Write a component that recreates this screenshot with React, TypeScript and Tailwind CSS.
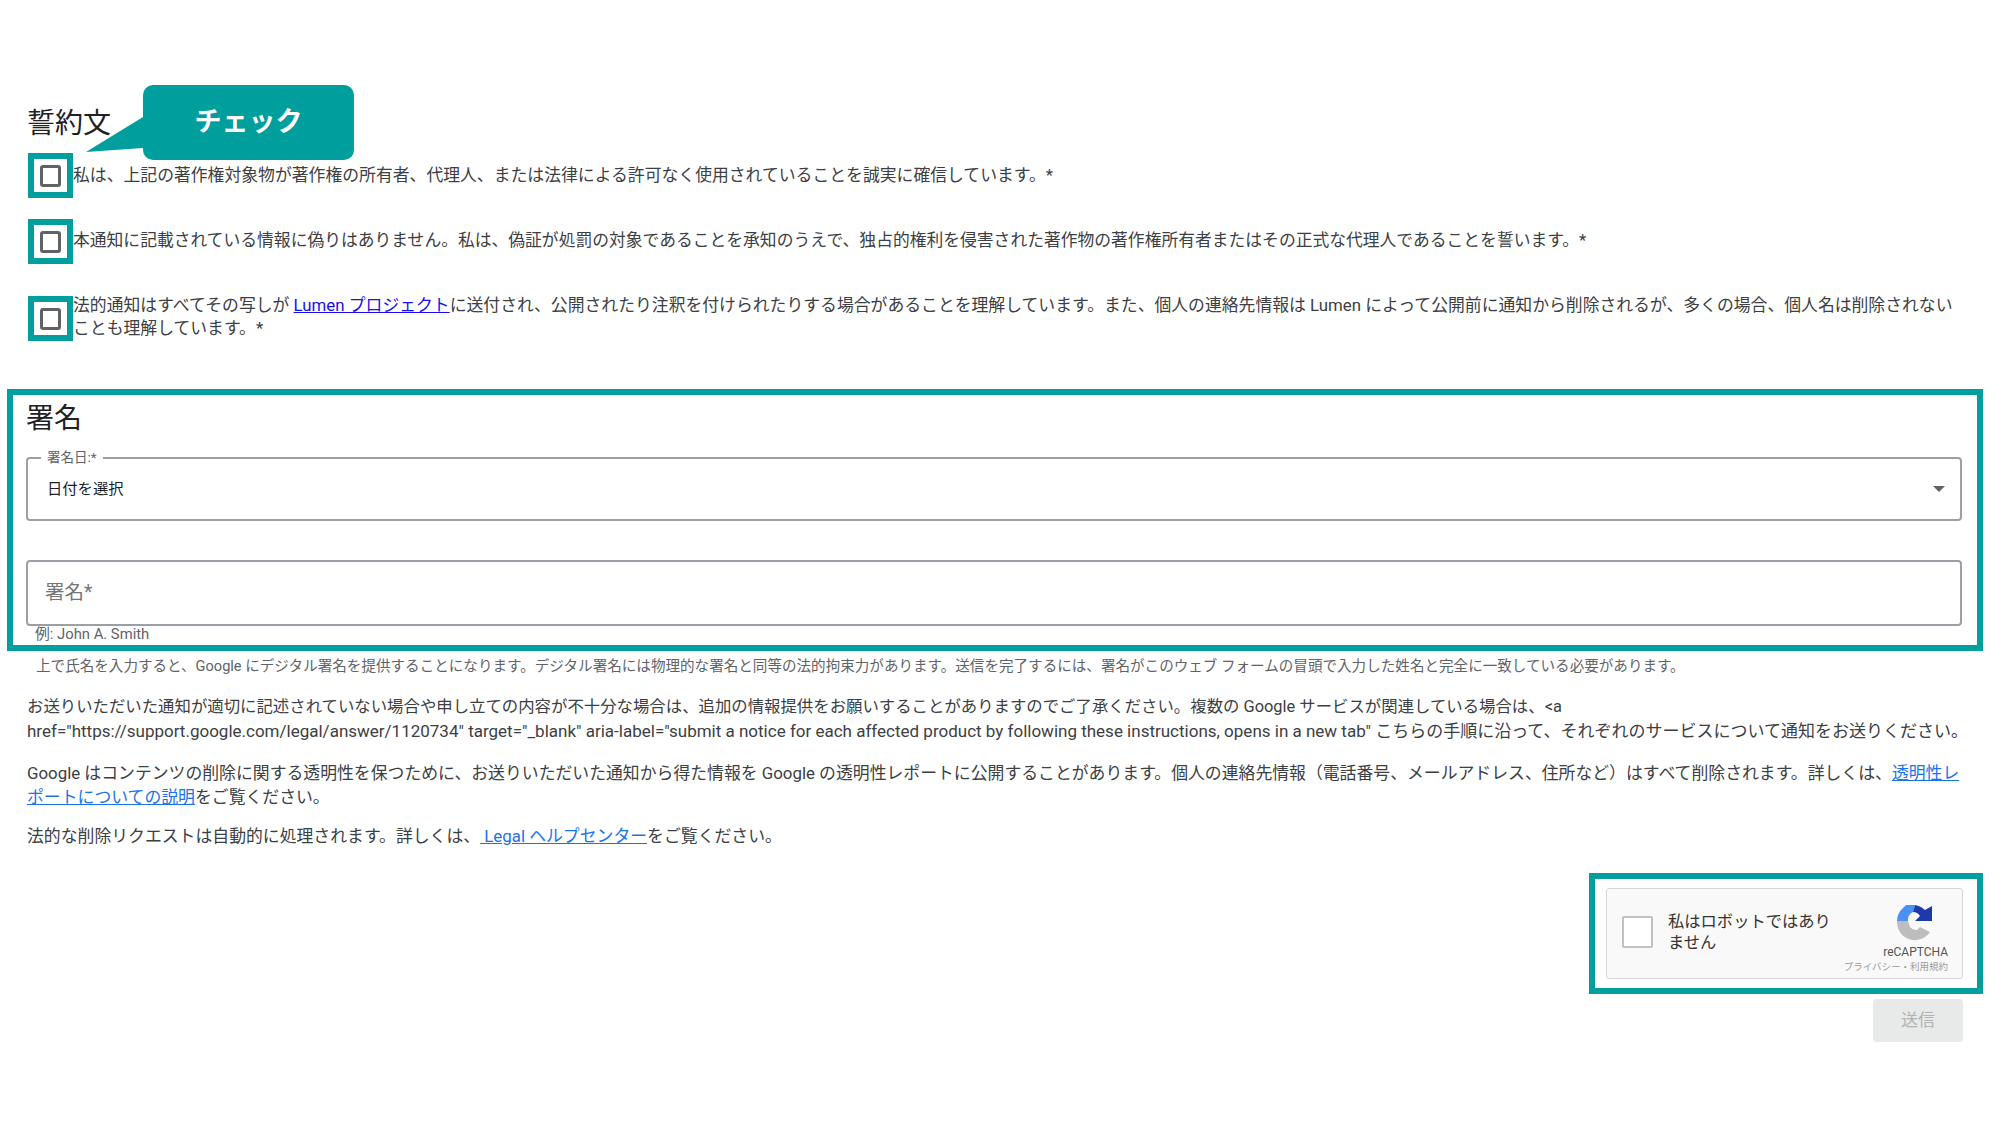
const FONT = "font-['Roboto','Noto_Sans_CJK_JP',sans-serif]";

function CheckBox() {
  return (
    <div className="w-[45px] h-[45px] ml-[1px] shrink-0 border-[6px] border-[#009e9c] flex items-center justify-center bg-white">
      <div className="w-[21px] h-[22px] rounded-[3px] border-[3px] border-[#5f6368]" />
    </div>
  );
}

function RecaptchaLogo() {
  return (
    <svg width="36" height="38" viewBox="0 0 36 38" className="block">
      <path d="M0 17 A18 18 0 0 1 6 4 L9 1 L18 1 L16 8 A9 9 0 0 0 11 17 Z" fill="#4a90f5" />
      <path d="M18 1 A18 18 0 0 1 28 6 L35 2 L35 17 L18 17 L23 12 A9 9 0 0 0 16 8 Z" fill="#1c3aa9" />
      <path d="M0 17 H11 L13 23 A8 8 0 0 0 20 26 L23 23 L33 28 A18 18 0 0 1 0 17 Z" fill="#bdbdbd" />
    </svg>
  );
}

export default function App() {
  return (
    <div className={`${FONT} w-[2000px] h-[1125px] bg-white overflow-hidden relative pl-[7px] pr-[17px] pt-[105px] text-[#3c4043]`}>
      {/* Callout */}
      <div className="absolute left-[143px] top-[85px] w-[211px] h-[75px] bg-[#009e9c] rounded-[10px] flex items-center justify-center text-white text-[27px] font-bold">
        チェック
      </div>
      <svg className="absolute left-[84px] top-[115px]" width="66" height="40" viewBox="0 0 66 40">
        <path d="M59 2 L2 37 L59 33 L66 20 Z" fill="#009e9c" />
      </svg>

      {/* Declaration */}
      <div className="pl-[20px] pr-[19px]">
        <h2 className="text-[28px] leading-[38px] text-[#202124] font-normal">誓約文</h2>
        <div className="flex items-center mt-[10px] text-[16.84px] leading-[23px]">
          <CheckBox />
          <p className="whitespace-nowrap">私は、上記の著作権対象物が著作権の所有者、代理人、または法律による許可なく使用されていることを誠実に確信しています。*</p>
        </div>
        <div className="flex items-center mt-[21px] text-[16.8px] leading-[23px]">
          <CheckBox />
          <p className="whitespace-nowrap pb-[2px]">本通知に記載されている情報に偽りはありません。私は、偽証が処罰の対象であることを承知のうえで、独占的権利を侵害された著作物の著作権所有者またはその正式な代理人であることを誓います。*</p>
        </div>
        <div className="flex items-center mt-[32px] text-[16.83px] leading-[23px]">
          <CheckBox />
          <p className="whitespace-nowrap -mt-[3px]">
            法的通知はすべてその写しが <a className="text-[#1a0dee] underline">Lumen プロジェクト</a>に送付され、公開されたり注釈を付けられたりする場合があることを理解しています。また、個人の連絡先情報は Lumen によって公開前に通知から削除されるが、多くの場合、個人名は削除されない
            <br />
            ことも理解しています。*
          </p>
        </div>
      </div>

      {/* Signature */}
      <section className="mt-[48px] h-[262px] border-[6px] border-[#009e9c] pl-[13px] pr-[15px]">
        <h2 className="text-[28px] leading-[38px] mt-[5px] text-[#202124] font-normal">署名</h2>
        <div className="relative mt-[19px] h-[64px] rounded-[4px] border-2 border-[#9aa0a6] flex items-center justify-between pl-[19px] pr-[15px]">
          <span className="absolute left-[13px] -top-[10px] bg-white px-[6px] text-[13.5px] leading-[16px] text-[#5f6368]">署名日:*</span>
          <span className="text-[15.3px] text-[#202124]">日付を選択</span>
          <span className="w-0 h-0 border-x-[6px] border-x-transparent border-t-[6px] border-t-[#5f6368]" />
        </div>
        <div className="mt-[39px] h-[66px] rounded-[4px] border-2 border-[#9aa0a6] flex items-center pl-[17px] text-[#757575] text-[19.5px]">
          署名*
        </div>
        <p className="pl-[9px] text-[14.8px] leading-[16px] text-[#5f6368]">例: John A. Smith</p>
      </section>

      <div className="pl-[20px] pr-[19px]">
        <p className="pl-[9px] mt-[6px] text-[14.57px] leading-[18px] text-[#5f6368] whitespace-nowrap">
          上で氏名を入力すると、Google にデジタル署名を提供することになります。デジタル署名には物理的な署名と同等の法的拘束力があります。送信を完了するには、署名がこのウェブ フォームの冒頭で入力した姓名と完全に一致している必要があります。
        </p>
        <p className="mt-[20px] text-[16.4px] leading-[24px] whitespace-nowrap">
          お送りいただいた通知が適切に記述されていない場合や申し立ての内容が不十分な場合は、追加の情報提供をお願いすることがありますのでご了承ください。複数の Google サービスが関連している場合は、&lt;a
          <br />
          <span className="text-[17px]">href="https://support.google.com/legal/answer/1120734" target="_blank" aria-label="submit a notice for each affected product by following these instructions, opens in a new tab" こちらの手順に沿って、それぞれのサービスについて通知をお送りください。</span>
        </p>
        <p className="mt-[17px] text-[16.85px] leading-[24px] whitespace-nowrap">
          Google はコンテンツの削除に関する透明性を保つために、お送りいただいた通知から得た情報を Google の透明性レポートに公開することがあります。個人の連絡先情報（電話番号、メールアドレス、住所など）はすべて削除されます。詳しくは、<a className="text-[#1a73e8] underline">透明性レ<br />ポートについての説明</a>をご覧ください。
        </p>
        <p className="mt-[15px] text-[16.85px] leading-[24px] whitespace-nowrap">
          法的な削除リクエストは自動的に処理されます。詳しくは、<a className="text-[#1a73e8] underline"> Legal ヘルプセンター</a>をご覧ください。
        </p>
      </div>

      {/* reCAPTCHA */}
      <div className="flex justify-end mt-[25px]">
        <div className="w-[394px] h-[121px] border-[6px] border-[#009e9c] pl-[11px] pt-[9px]">
          <div className="w-[357px] h-[91px] bg-[#f9f9f9] border border-[#d6d6d6] rounded-[3px] flex items-center pl-[15px] pr-[14px] relative">
            <div className="w-[31px] h-[32px] -mt-[4px] bg-white border-2 border-[#c1c1c1] rounded-[2px] shrink-0" />
            <p className="ml-[15px] w-[170px] text-[16.3px] leading-[21px] text-[#333] -mt-[3px]">私はロボットではありません</p>
            <div className="ml-auto flex flex-col items-end mt-[9px]">
              <div className="mr-[15px]"><RecaptchaLogo /></div>
              <span className="text-[12px] leading-[16px] mt-[2px] text-[#555]">reCAPTCHA</span>
              <span className="text-[9.5px] leading-[13px] text-[#999] whitespace-nowrap">プライバシー・利用規約</span>
            </div>
          </div>
        </div>
      </div>
      <div className="flex justify-end pr-[20px] mt-[5px]">
        <button className="w-[90px] h-[43px] bg-[#e8eaea] rounded-[4px] text-[#b0b3b3] text-[17px]">送信</button>
      </div>
    </div>
  );
}
